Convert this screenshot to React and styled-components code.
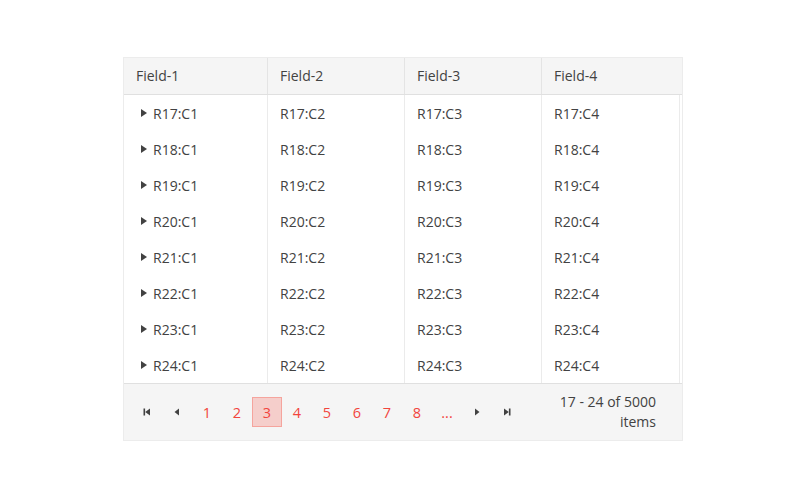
import React from "react";
import styled, { createGlobalStyle } from "styled-components";

const rows = [17, 18, 19, 20, 21, 22, 23, 24];
const columns = ["Field-1", "Field-2", "Field-3", "Field-4"];
const widths = [144, 137, 137, 138];
const pages = ["1", "2", "3", "4", "5", "6", "7", "8", "..."];

export default function App() {
  return (
    <>
      <GlobalStyle />
      <Page>
        <Grid>
          <HeaderRow>
            {columns.map((c, i) => (
              <HeaderCell key={c} $w={widths[i]} $last={i === 3}>
                {c}
              </HeaderCell>
            ))}
            <ScrollGap />
          </HeaderRow>

          <Body>
            {rows.map((r) => (
              <Row key={r}>
                {columns.map((c, i) => (
                  <Cell key={c} $w={widths[i]}>
                    {i === 0 && <Expand />}
                    R{r}:C{i + 1}
                  </Cell>
                ))}
              </Row>
            ))}
          </Body>

          <Pager>
            <Buttons>
              <NavButton aria-label="first">
                <svg width="10" height="10" viewBox="0 0 10 10">
                  <rect x="1.5" y="1.5" width="1.6" height="7" fill="#424242" />
                  <path d="M8 1.5 L3.2 5 L8 8.5 Z" fill="#424242" />
                </svg>
              </NavButton>
              <NavButton aria-label="prev">
                <svg width="10" height="10" viewBox="0 0 10 10">
                  <path d="M7 1.5 L2.5 5 L7 8.5 Z" fill="#424242" />
                </svg>
              </NavButton>
              {pages.map((p) => (
                <PageButton key={p} $selected={p === "3"}>
                  {p}
                </PageButton>
              ))}
              <NavButton aria-label="next">
                <svg width="10" height="10" viewBox="0 0 10 10">
                  <path d="M3 1.5 L7.5 5 L3 8.5 Z" fill="#424242" />
                </svg>
              </NavButton>
              <NavButton aria-label="last">
                <svg width="10" height="10" viewBox="0 0 10 10">
                  <path d="M2 1.5 L6.8 5 L2 8.5 Z" fill="#424242" />
                  <rect x="6.9" y="1.5" width="1.6" height="7" fill="#424242" />
                </svg>
              </NavButton>
            </Buttons>
            <Info>17 - 24 of 5000 items</Info>
          </Pager>
        </Grid>
      </Page>
    </>
  );
}

const GlobalStyle = createGlobalStyle`
  body {
    margin: 0;
    background: #fff;
    font-family: "Open Sans", "Noto Sans", sans-serif;
    color: #424242;
  }
`;

const Page = styled.div`
  padding: 57px 0 0 123px;
`;

const Grid = styled.div`
  width: 558px;
  border: 1px solid #ececec;
  font-size: 14px;
  color: #424242;
`;

const HeaderRow = styled.div`
  display: flex;
  background: #f5f5f5;
  border-bottom: 1px solid #e0e0e0;
`;

const HeaderCell = styled.div`
  width: ${(p) => p.$w}px;
  box-sizing: border-box;
  height: 36px;
  line-height: 36px;
  padding-left: 12px;
  border-right: 1px solid ${(p) => (p.$last ? "transparent" : "#e4e4e4")};
`;

const ScrollGap = styled.div`
  flex: 1;
`;

const Body = styled.div`
  background: #fff;
`;

const Row = styled.div`
  display: flex;
`;

const Cell = styled.div`
  width: ${(p) => p.$w}px;
  box-sizing: border-box;
  height: 36px;
  display: flex;
  align-items: center;
  padding-left: 12px;
  border-right: 1px solid #ebebeb;
`;

const Expand = styled.span`
  width: 0;
  height: 0;
  margin: 0 6px 0 5px;
  border-top: 4px solid transparent;
  border-bottom: 4px solid transparent;
  border-left: 6px solid #424242;
`;

const Pager = styled.div`
  display: flex;
  align-items: center;
  justify-content: space-between;
  height: 56px;
  padding: 0 26px 0 8px;
  background: #f5f5f5;
  border-top: 1px solid #e0e0e0;
`;

const Buttons = styled.div`
  display: flex;
  align-items: center;
`;

const NavButton = styled.div`
  width: 30px;
  height: 30px;
  display: flex;
  align-items: center;
  justify-content: center;
`;

const PageButton = styled.div`
  width: 30px;
  height: 30px;
  box-sizing: border-box;
  display: flex;
  align-items: center;
  justify-content: center;
  font-size: 14.5px;
  color: #f2453d;
  background: ${(p) => (p.$selected ? "rgba(244, 67, 54, 0.22)" : "transparent")};
  border: 1px solid ${(p) => (p.$selected ? "rgba(244, 67, 54, 0.3)" : "transparent")};
`;

const Info = styled.div`
  width: 112px;
  text-align: right;
  line-height: 20px;
`;
